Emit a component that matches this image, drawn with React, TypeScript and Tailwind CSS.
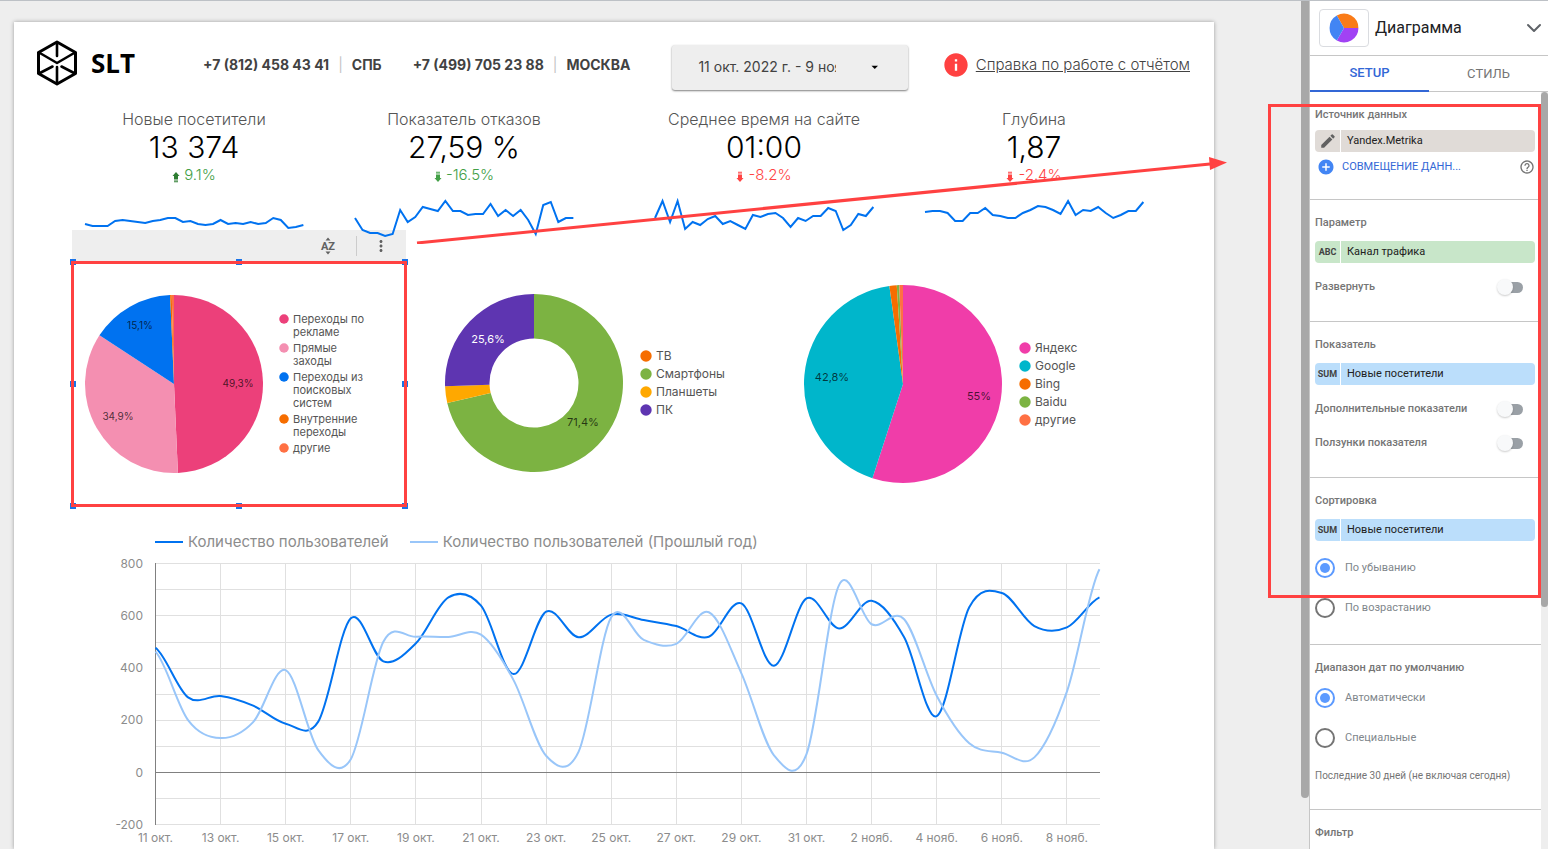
import { ChevronDown } from 'lucide-react';
import type { ReactNode } from 'react';
import { MdAddCircle, MdArrowDropDown, MdEdit, MdHelpOutline, MdInfo, MdMoreVert } from 'react-icons/md';

type Slice = { label: string; value: number; color: string };
type SliceLabel = { text: string; x: number; y: number; light?: boolean };

const kpis = [
  {
    title: 'Новые посетители',
    value: '13 374',
    delta: '9.1%',
    up: true,
    tone: 'text-[#43a047]',
    trend: [24, 26, 26, 26, 21, 20, 21, 22, 23, 21, 20, 18, 18, 22, 21, 24, 25, 24, 20, 24, 23, 24, 22, 24, 23, 18, 20, 28, 27, 25]
  },
  {
    title: 'Показатель отказов',
    value: '27,59 %',
    delta: '-16.5%',
    up: false,
    tone: 'text-[#43a047]',
    trend: [18, 30, 33, 33, 36, 34, 10, 22, 17, 7, 9, 11, 1, 11, 11, 15, 14, 14, 4, 16, 10, 16, 10, 20, 34, 5, 2, 22, 18, 18]
  },
  {
    title: 'Среднее время на сайте',
    value: '01:00',
    delta: '-8.2%',
    up: false,
    tone: 'text-[#ff4444]',
    trend: [18, 1, 22, 1, 29, 22, 25, 19, 16, 24, 21, 25, 29, 15, 17, 14, 13, 18, 27, 18, 21, 16, 16, 8, 11, 30, 25, 14, 16, 7]
  },
  {
    title: 'Глубина',
    value: '1,87',
    delta: '-2.4%',
    up: false,
    tone: 'text-[#ff4444]',
    trend: [12, 11, 11, 13, 21, 21, 13, 13, 8, 15, 16, 18, 18, 13, 10, 6, 7, 10, 14, 1, 15, 10, 11, 7, 13, 18, 15, 11, 11, 2]
  }
];

const channels: Slice[] = [
  { label: 'Переходы по рекламе', value: 49.3, color: '#ec407a' },
  { label: 'Прямые заходы', value: 34.9, color: '#f48fb1' },
  { label: 'Переходы из поисковых систем', value: 15.1, color: '#0072f0' },
  { label: 'Внутренние переходы', value: 0.3, color: '#f66d00' },
  { label: 'другие', value: 0.4, color: '#ff7043' }
];

const devices: Slice[] = [
  { label: 'ТВ', value: 0, color: '#f66d00' },
  { label: 'Смартфоны', value: 71.4, color: '#7cb342' },
  { label: 'Планшеты', value: 3, color: '#ffa800' },
  { label: 'ПК', value: 25.6, color: '#5e35b1' }
];

const engines: Slice[] = [
  { label: 'Яндекс', value: 55, color: '#f03da9' },
  { label: 'Google', value: 42.8, color: '#00b6cb' },
  { label: 'Bing', value: 1.2, color: '#f66d00' },
  { label: 'Baidu', value: 0.4, color: '#7cb342' },
  { label: 'другие', value: 0.6, color: '#ff7043' }
];

const users = [
  478, 288, 293, 256, 187, 195, 591, 426, 495, 671, 639, 377, 616, 518, 605, 584, 561, 520, 648, 409, 667, 552, 658,
  518, 216, 633, 688, 561, 556, 671
];
const usersLastYear = [
  463, 201, 132, 193, 392, 86, 51, 501, 520, 519, 528, 354, 64, 80, 595, 508, 493, 614, 380, 66, 70, 718, 568, 587,
  294, 112, 76, 58, 310, 779
];
const days = [
  '11 окт.', '13 окт.', '15 окт.', '17 окт.', '19 окт.', '21 окт.', '23 окт.', '25 окт.',
  '27 окт.', '29 окт.', '31 окт.', '2 нояб.', '4 нояб.', '6 нояб.', '8 нояб.'
];

const Logo = () => (
  <div className="flex items-center gap-[13px]">
    <svg viewBox="0 0 42 46" className="h-[46px] w-[42px]" fill="none" stroke="#000" strokeWidth="3" strokeLinejoin="round" strokeLinecap="round">
      <path d="M21 2 39.5 12.5V33.5L21 44 2.5 33.5V12.5Z" />
      <path d="M21 3V16M3 12.5 21 23 39 12.5M21 27V43M16.5 26.5 3 33.5M25.5 26.5 39 33.5" strokeWidth="2.6" />
    </svg>
    <span className="font-['Open_Sans',sans-serif] text-[26px] leading-8 font-bold text-black">SLT</span>
  </div>
);

const Phone = ({ number, city }: { number: string; city: string }) => (
  <p className="flex items-center gap-[9px] whitespace-nowrap text-sm font-bold text-[#424242]">
    {number}
    <span className="font-normal text-[#c4c4c4]">|</span>
    {city}
  </p>
);

const Sparkline = ({ points }: { points: number[] }) => (
  <svg viewBox="0 0 220 30" className="relative z-10 mt-3.5 h-[30px] w-[220px] overflow-visible" fill="none">
    <polyline
      points={points.map((y, i) => `${1 + i * 7.53},${y}`).join(' ')}
      stroke="#0072f0"
      strokeWidth="2"
    />
  </svg>
);

const DeltaArrow = ({ up }: { up: boolean }) => (
  <svg viewBox="0 0 8 12" className={up ? 'mt-1 h-3 w-2 text-[#2e7d32]' : 'mt-1 h-3 w-2 rotate-180'} fill="currentColor">
    <path d="M4 1 7.500 5H6V8H2V5H.5ZM2 8.500H6V9.500H2ZM2 10.200H6V11.200H2Z" />
  </svg>
);

const Kpi = ({ kpi }: { kpi: (typeof kpis)[number] }) => (
  <section className="flex flex-col items-center whitespace-nowrap">
    <h2 className="text-base leading-[22px] font-light text-[#555]">{kpi.title}</h2>
    <p className="text-[30px] leading-[34px] font-light text-black">{kpi.value}</p>
    <p className={`flex items-center gap-1 text-[15px] leading-[22px] font-light ${kpi.tone}`}>
      <DeltaArrow up={kpi.up} />
      {kpi.delta}
    </p>
    <Sparkline points={kpi.trend} />
  </section>
);

const point = (radius: number, share: number) => {
  const angle = (share / 100) * 2 * Math.PI;
  return `${100 + radius * Math.sin(angle)} ${100 - radius * Math.cos(angle)}`;
};

const Pie = ({
  slices,
  radius,
  inner = 0,
  labels,
  small
}: {
  slices: Slice[];
  radius: number;
  inner?: number;
  labels: SliceLabel[];
  small?: boolean;
}) => {
  let start = 0;
  return (
    <svg viewBox="0 0 200 200" className="size-[200px] shrink-0">
      {slices.map((slice) => {
        const from = start;
        start += slice.value;
        const large = slice.value > 50 ? 1 : 0;
        return (
          <path
            key={slice.label}
            fill={slice.color}
            d={`M${point(inner, from)}L${point(radius, from)}A${radius} ${radius} 0 ${large} 1 ${point(radius, start)}L${point(inner, start)}A${inner} ${inner} 0 ${large} 0 ${point(inner, from)}Z`}
          />
        );
      })}
      {labels.map((label) => (
        <text
          key={label.text}
          x={label.x}
          y={label.y}
          textAnchor="middle"
          dominantBaseline="central"
          className={small ? 'text-[10px]' : 'text-[11px]'}
          fill={label.light ? '#fff' : '#000000b3'}
        >
          {label.text}
        </text>
      ))}
    </svg>
  );
};

const Legend = ({ slices, small }: { slices: Slice[]; small?: boolean }) => (
  <ul className={small ? 'w-[92px] space-y-[3px] text-[11px] leading-[13px] text-[#555]' : 'text-[12px] leading-[18px] text-[#555]'}>
    {slices.map((slice) => (
      <li key={slice.label} className="flex items-start gap-1">
        <svg viewBox="0 0 12 12" className={small ? 'mt-px size-2.5 shrink-0' : 'mt-[3px] size-3 shrink-0'}>
          <circle cx="6" cy="6" r="5.7" fill={slice.color} />
        </svg>
        {slice.label}
      </li>
    ))}
  </ul>
);

const handles = [
  '-top-[3px] -left-[3px]',
  '-top-[3px] left-1/2 -translate-x-1/2',
  '-top-[3px] -right-[3px]',
  'top-1/2 -left-[3px] -translate-y-1/2',
  'top-1/2 -right-[3px] -translate-y-1/2',
  '-bottom-[3px] -left-[3px]',
  '-bottom-[3px] left-1/2 -translate-x-1/2',
  '-bottom-[3px] -right-[3px]'
];

const SelectedChart = () => (
  <section className="w-[334px] shrink-0">
    <div className="flex h-8 items-center justify-end bg-[#eee] text-[#616161]">
      <button type="button" aria-label="Сортировка" className="mr-5 flex flex-col items-center">
        <svg viewBox="0 0 16 18" className="h-[18px] w-4" fill="currentColor">
          <path d="M5.500 3.500 8 .5 10.500 3.500ZM5.500 14.500 8 17.500 10.500 14.500Z" />
          <text x="8" y="13" textAnchor="middle" className="font-[Roboto,sans-serif] text-[11px] font-bold">AZ</text>
        </svg>
      </button>
      <span className="h-5 w-px bg-[#ccc]" />
      <button type="button" aria-label="Ещё" className="mr-4 ml-[15px]">
        <MdMoreVert className="size-[18px]" />
      </button>
    </div>
    <div className="relative flex h-[244px] items-center border-x border-[#3367d6] pl-px">
      <Pie
        slices={channels}
        radius={89}
        small
        labels={[
          { text: '49,3%', x: 164, y: 99 },
          { text: '34,9%', x: 44, y: 132 },
          { text: '15,1%', x: 66, y: 41 }
        ]}
      />
      <div className="ml-[5px]">
        <Legend slices={channels} small />
      </div>
      {handles.map((place) => (
        <span key={place} className={`absolute size-1.5 bg-[#1a73e8] ${place}`} />
      ))}
      <div className="absolute -inset-x-[2px] -inset-y-px border-[3px] border-[#ff4141]" />
    </div>
  </section>
);

const px = (day: number) => 141.5 + day * 32.55;
const py = (value: number) => 220.5 - value * 0.261;

// Catmull-Rom through every day, written as cubic segments
const curve = (values: number[]) => {
  const at = (i: number) => values[Math.min(Math.max(i, 0), values.length - 1)];
  return values.slice(1).reduce((d, value, i) => {
    const c1 = at(i) + (at(i + 1) - at(i - 1)) / 6;
    const c2 = value - (at(i + 2) - at(i)) / 6;
    return `${d}C${px(i + 1 / 3)} ${py(c1)} ${px(i + 2 / 3)} ${py(c2)} ${px(i + 1)} ${py(value)}`;
  }, `M${px(0)} ${py(values[0])}`);
};

const UsersChart = () => (
  <section>
    <div className="flex h-5 items-center pl-[141px] text-[15px] text-[#8c8c8c]">
      <span className="mr-[5px] h-0.5 w-7 bg-[#0072f0]" />
      Количество пользователей
      <span className="mr-[5px] ml-[21px] h-0.5 w-7 bg-[#99c6f9]" />
      Количество пользователей (Прошлый год)
    </div>
    <svg viewBox="0 0 1200 300" className="w-full" fill="none">
      {[800, 700, 600, 500, 400, 300, 200, 100, -100, -200].map((value) => (
        <path key={value} d={`M141 ${Math.floor(py(value)) + 0.5}H1086`} stroke="#e0e0e0" />
      ))}
      {days.map((day, i) => (
        <g key={day}>
          <path d={`M${Math.floor(px(i * 2)) + 0.5} 11V273`} stroke="#e0e0e0" />
          <text x={px(i * 2)} y="290" textAnchor="middle" fill="#8c8c8c" className="text-[12px]">
            {day}
          </text>
        </g>
      ))}
      {[800, 600, 400, 200, 0, -200].map((value) => (
        <text key={value} x="129" y={py(value) + 4} textAnchor="end" fill="#8c8c8c" className="text-[12px]">
          {value}
        </text>
      ))}
      <path d="M141.500 11V273M141 220.500H1086" stroke="#808080" />
      <path d={curve(users)} stroke="#0072f0" strokeWidth="2" />
      <path d={curve(usersLastYear)} stroke="#99c6f9" strokeWidth="2" />
    </svg>
  </section>
);

const Report = () => (
  <main className="mt-[21px] mr-[87px] ml-3.5 min-w-0 flex-1 bg-white font-['Inter','Noto_Sans',sans-serif] shadow-[0_0_4px_rgba(0,0,0,0.35)]">
    <header className="flex h-[86px] items-center pr-6 pl-[22px]">
      <div className="pb-1">
        <Logo />
      </div>
      <div className="ml-[68px] flex gap-[31px]">
        <Phone number="+7 (812) 458 43 41" city="СПБ" />
        <Phone number="+7 (499) 705 23 88" city="МОСКВА" />
      </div>
      <button
        type="button"
        className="mt-1 mr-auto ml-[42px] flex h-[45px] w-[236px] items-center rounded-[3px] bg-[#eee] px-[26px] text-sm text-[#424242] shadow-[0_1px_2px_rgba(0,0,0,0.5)]"
      >
        <span className="w-[142px] overflow-hidden text-left whitespace-nowrap">11 окт. 2022 г. - 9 нояб. 2022 г.</span>
        <MdArrowDropDown className="ml-[31px] size-4 text-black" />
      </button>
      <a href="#help" className="flex items-center gap-1.5 text-[15px] font-light whitespace-nowrap text-[#424242] underline">
        <MdInfo className="size-7 text-[#ff4141]" />
        Справка по работе с отчётом
      </a>
    </header>
    <div className="grid grid-cols-[9fr_9fr_1fr_9fr_9fr] px-[45px] [&>*:nth-child(3)]:col-start-4">
      {kpis.map((kpi) => (
        <Kpi key={kpi.title} kpi={kpi} />
      ))}
    </div>
    <div className="flex h-[302px] items-start pl-[58px]">
      <SelectedChart />
      <div className="ml-7 flex h-[306px] w-[369px] shrink-0 items-center">
        <Pie
          slices={devices}
          radius={89}
          inner={44.5}
          labels={[
            { text: '25,6%', x: 54, y: 56, light: true },
            { text: '71,4%', x: 149, y: 139 }
          ]}
        />
        <div className="ml-1.5">
          <Legend slices={devices} />
        </div>
      </div>
      <div className="flex h-[308px] items-center">
        <Pie
          slices={engines}
          radius={99}
          labels={[
            { text: '55%', x: 176, y: 112 },
            { text: '42,8%', x: 29, y: 93 }
          ]}
        />
        <div className="ml-4">
          <Legend slices={engines} />
        </div>
      </div>
    </div>
    <UsersChart />
  </main>
);

const PanelSection = ({ title, children }: { title: string; children?: ReactNode }) => (
  <section className="border-b border-[#c6c6c6] pt-[15px] pr-1.5 pl-[5px] last:border-b-0">
    <h3 className="text-[11px] leading-4 font-medium text-[#757575]">{title}</h3>
    {children}
  </section>
);

const chipColors = {
  source: 'bg-[#e0dbd7]',
  dimension: 'bg-[#c8e6c9]',
  metric: 'bg-[#bbdefb]'
};

const Chip = ({ kind, icon, label }: { kind: keyof typeof chipColors; icon: ReactNode; label: string }) => (
  <button type="button" className="flex h-[22px] w-full gap-px text-left text-[11px] leading-[22px] text-[#212121]">
    <span className={`flex w-[25px] items-center justify-center rounded-l-sm text-[9px] font-bold text-[#424242] ${chipColors[kind]}`}>
      {icon}
    </span>
    <span className={`flex-1 rounded-r-sm pl-1.5 ${chipColors[kind]}`}>{label}</span>
  </button>
);

const Toggle = ({ label }: { label: string }) => (
  <label className="flex h-[34px] items-center justify-between pr-3 text-[11px] font-medium text-[#757575]">
    {label}
    <input
      type="checkbox"
      className="relative h-4 w-[26px] appearance-none before:absolute before:top-[3px] before:right-0 before:h-[11px] before:w-[22px] before:rounded-full before:bg-[#9aa0a6] after:absolute after:left-0 after:size-4 after:rounded-full after:bg-[#f8f9fa] after:shadow-[0_1px_2px_rgba(0,0,0,0.2)]"
    />
  </label>
);

const Radio = ({ name, label, checked }: { name: string; label: string; checked?: boolean }) => (
  <label className="flex h-10 items-center gap-2.5 text-[11px] text-[#80868b]">
    <input
      type="radio"
      name={name}
      defaultChecked={checked}
      className="flex size-5 appearance-none items-center justify-center rounded-full border-2 border-[#757575] before:size-2.5 before:rounded-full checked:border-[#5c9aff] checked:before:bg-[#5c9aff]"
    />
    {label}
  </label>
);

const SetupPanel = () => (
  <aside className="flex w-[239px] shrink-0 flex-col border-l border-[#c6c6c6] bg-white font-[Roboto,sans-serif]">
    <button type="button" className="flex h-[55px] shrink-0 items-center border-b border-[#c6c6c6] pr-0.5 pl-[9px] text-base text-[#202124]">
      <span className="mr-1.5 flex h-[38px] w-[50px] items-center justify-center rounded-sm border border-[#dadce0]">
        <svg viewBox="-15 -15 30 30" className="size-[30px]">
          <path d="M0 0-7.200-12.500A14.400 14.400 0 0 1 14.400 0Z" fill="#fa7b17" />
          <path d="M0 0H14.400A14.400 14.400 0 0 1-7.200 12.500Z" fill="#a142f4" />
          <path d="M0 0-7.200 12.500A14.400 14.400 0 0 1-7.200-12.500Z" fill="#4285f4" />
        </svg>
      </span>
      Диаграмма
      <ChevronDown className="ml-auto size-6 text-[#5f6368]" />
    </button>
    <div role="tablist" className="grid h-9 shrink-0 grid-cols-2 border-b border-[#c6c6c6] text-[13px]">
      <button type="button" role="tab" aria-selected="true" className="-mb-px border-b-2 border-[#3367d6] font-medium text-[#3367d6]">
        SETUP
      </button>
      <button type="button" role="tab" aria-selected="false" className="text-[#757575]">
        СТИЛЬ
      </button>
    </div>
    <div className="flex min-h-0 flex-1">
      <div className="min-w-0 flex-1 overflow-hidden">
        <PanelSection title="Источник данных">
          <div className="pt-[7px] pb-[17px]">
            <Chip kind="source" icon={<MdEdit className="size-[18px] text-[#616161]" />} label="Yandex.Metrika" />
            <div className="flex h-[30px] items-center justify-between pl-0.5 text-[#757575]">
              <button type="button" className="flex items-center gap-[7px] text-[11px] text-[#3367d6]">
                <MdAddCircle className="size-[18px] text-[#4285f4]" />
                СОВМЕЩЕНИЕ ДАНН...
              </button>
              <button type="button" aria-label="Справка">
                <MdHelpOutline className="size-4" />
              </button>
            </div>
          </div>
        </PanelSection>
        <PanelSection title="Параметр">
          <div className="space-y-[7px] pt-2.5 pb-[17px]">
            <Chip kind="dimension" icon="ABC" label="Канал трафика" />
            <Toggle label="Развернуть" />
          </div>
        </PanelSection>
        <PanelSection title="Показатель">
          <div className="space-y-[7px] pt-2.5 pb-[17px]">
            <Chip kind="metric" icon="SUM" label="Новые посетители" />
            <div>
              <Toggle label="Дополнительные показатели" />
              <Toggle label="Ползунки показателя" />
            </div>
          </div>
        </PanelSection>
        <PanelSection title="Сортировка">
          <div className="space-y-[7px] pt-2.5 pb-4">
            <Chip kind="metric" icon="SUM" label="Новые посетители" />
            <div>
              <Radio name="order" label="По убыванию" checked />
              <Radio name="order" label="По возрастанию" />
            </div>
          </div>
        </PanelSection>
        <PanelSection title="Диапазон дат по умолчанию">
          <div className="pt-0.5 pb-[25px]">
            <Radio name="range" label="Автоматически" checked />
            <Radio name="range" label="Специальные" />
            <p className="mt-2.5 text-[10px] leading-4 whitespace-nowrap text-[#757575]">Последние 30 дней (не включая сегодня)</p>
          </div>
        </PanelSection>
        <PanelSection title="Фильтр" />
      </div>
      <div className="w-[7px] bg-[#eee]">
        <div className="h-[68%] rounded-full bg-[#a8a8a8]" />
      </div>
    </div>
  </aside>
);

export default function App() {
  return (
    <div className="relative flex h-screen overflow-hidden border-t border-[#bdc1c6] bg-[#eee]">
      <Report />
      <div className="h-[94%] w-2 shrink-0 rounded-b-full bg-[#a8a8a8]" />
      <SetupPanel />
      <svg viewBox="0 0 812 88" className="pointer-events-none absolute top-[155px] left-[416px] z-20 h-[88px] w-[812px]">
        <path d="M1 87 794 8" stroke="#ff4141" strokeWidth="3" />
        <path d="M793 1 811 6.500 794 14Z" fill="#ff4141" />
      </svg>
      <div className="pointer-events-none absolute top-[103px] right-[7px] z-20 h-[494px] w-[273px] border-[3px] border-[#ff4141]" />
    </div>
  );
}
